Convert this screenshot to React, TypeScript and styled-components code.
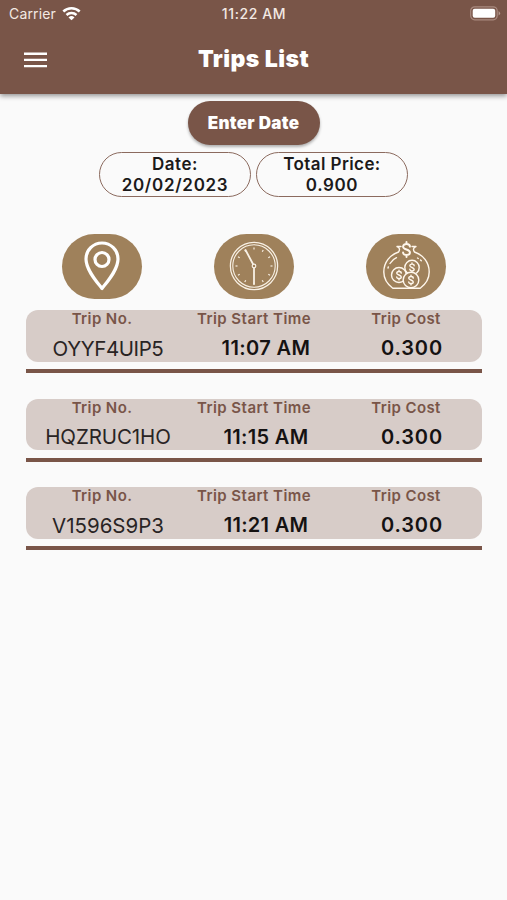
import React from 'react';
import styled, { createGlobalStyle } from 'styled-components';

const brown = '#795548';

const GlobalStyle = createGlobalStyle`
  * { box-sizing: border-box; }
  body { margin: 0; background: #fafafa; font-family: Inter, "Liberation Sans", sans-serif; }
`;

const Screen = styled.div`
  width: 507px;
  height: 900px;
  overflow: hidden;
  background: #fafafa;
  color: #1c1a1a;
`;

const Header = styled.header`
  height: 94px;
  background: ${brown};
  color: #fff;
  box-shadow: 0 2px 5px rgba(0, 0, 0, 0.42);
`;

const StatusBar = styled.div`
  display: grid;
  grid-template-columns: 1fr auto 1fr;
  align-items: center;
  height: 27px;
  padding: 0 6px 0 9px;
  color: #f3e9e3;
  font-size: 14px;
  line-height: 27px;
`;

const Carrier = styled.div`
  display: flex;
  align-items: center;
  gap: 6px;
  letter-spacing: 0.15px;
`;

const Clock = styled.div`
  margin-right: 2px;
  font-weight: 500;
  letter-spacing: 0.6px;
`;

const Battery = styled.svg`
  justify-self: end;
`;

const TitleBar = styled.div`
  display: grid;
  grid-template-columns: 60px 1fr 60px;
  align-items: center;
  height: 64px;
`;

const MenuButton = styled.button`
  display: flex;
  width: 23px;
  height: 23px;
  margin: 0 0 0 24px;
  padding: 0;
  border: 0;
  background: none;
`;

const Title = styled.h1`
  margin: 0;
  font-size: 23px;
  font-weight: 900;
  letter-spacing: 0.45px;
  line-height: 28px;
  text-align: center;
`;

const Filters = styled.section`
  display: flex;
  flex-direction: column;
  align-items: center;
  gap: 7px;
  padding-top: 7px;
`;

const DateButton = styled.button`
  width: 132px;
  height: 44px;
  padding: 0;
  border: 0;
  border-radius: 22px;
  background: ${brown};
  color: #fff;
  box-shadow: 0 2px 3px rgba(0, 0, 0, 0.3);
  font: 900 17px/44px Inter, sans-serif;
  letter-spacing: 0.3px;
`;

const Summary = styled.div`
  display: flex;
  gap: 5px;
`;

const Pill = styled.div`
  width: 152px;
  height: 45px;
  border: 1.4px solid #8b6a5e;
  border-radius: 23px;
  padding-top: 1px;
  font-size: 17px;
  font-weight: 600;
  line-height: 20.5px;
  text-align: center;
`;

const PillLine = styled.div<{ $spacing: number }>`
  letter-spacing: ${(p) => p.$spacing}px;
`;

const Icons = styled.div`
  display: grid;
  grid-template-columns: repeat(3, 152px);
  justify-items: center;
  margin: 37px 25px 0 26px;
`;

const Badge = styled.div`
  display: flex;
  width: 80px;
  height: 65px;
  border-radius: 33px;
  background: #9f815b;
`;

const Trips = styled.main`
  display: flex;
  flex-direction: column;
  gap: 25.4px;
  margin: 11px 25px 0 26px;
`;

const Trip = styled.article`
  height: 63.2px;
  border-bottom: 4px solid ${brown};
`;

const TripCard = styled.div`
  height: 51.5px;
  border-radius: 12px;
  background: #d7ccc8;
`;

const Labels = styled.div`
  display: grid;
  grid-template-columns: repeat(3, 152px);
  height: 17px;
  color: ${brown};
  font-size: 15px;
  font-weight: 600;
  line-height: 17px;
  text-align: center;
`;

const Label = styled.span<{ $spacing: number }>`
  letter-spacing: ${(p) => p.$spacing}px;
`;

const Values = styled.div`
  display: grid;
  grid-template-columns: 164px 152px 140px;
  align-items: center;
  height: 34px;
  margin-top: 4px;
  line-height: 34px;
  text-align: center;
`;

const TripNumber = styled.span<{ $spacing: number }>`
  font-size: 20.5px;
  letter-spacing: ${(p) => p.$spacing}px;
  color: #292424;
`;

const Value = styled.span<{ $spacing: number }>`
  height: 35px;
  font-size: 20px;
  font-weight: 600;
  letter-spacing: ${(p) => p.$spacing}px;
  color: #151212;
`;

const PinIcon = () => (
  <svg width="80" height="65" viewBox="0 0 80 65" fill="none" stroke="#fff" strokeWidth="3.2">
    <path d="M40 54.5C35 48 24 36 24 25a16 16 0 0 1 32 0c0 11-11 23-16 29.500Z" strokeLinejoin="round" />
    <circle cx="40" cy="25.500" r="7" />
  </svg>
);

const ClockIcon = () => (
  <svg width="80" height="65" viewBox="0 0 80 65" fill="none" stroke="#f8f0e4">
    <circle cx="40" cy="32" r="23.600" strokeWidth="1.300" />
    <circle cx="40" cy="32" r="21.200" strokeWidth="1.100" />
    {Array.from({ length: 12 }, (_, i) => (
      <path key={i} d="M40 13.500v2" strokeWidth="1.200" transform={`rotate(${i * 30} 40 32)`} />
    ))}
    <path d="m39 30-7.500-14M40 34v16" strokeWidth="1.800" strokeLinecap="round" />
    <circle cx="40" cy="32" r="1.800" strokeWidth="1.200" />
  </svg>
);

const dollar = 'M3 -2.500C3 -5.500 -3 -5.500 -3 -2.500C-3 0 3 0 3 2.500C3 5.500 -3 5.500 -3 2.500M0 -6.500V-4.700M0 4.700V6.500';

const SavingsIcon = () => (
  <svg width="80" height="65" viewBox="0 0 80 65" fill="none" stroke="#fff7ec" strokeWidth="1.400" strokeLinecap="round" strokeLinejoin="round">
    <path d="M35 12.500h-4c3 1 3 3.500 1.500 5.500C24 21 17.800 28 17.800 38c0 8 4 12.500 9 16.200h27.400c5-3.700 9-8.200 9-16.200 0-10-6.200-17-14.700-20-1.500-2-1.500-4.500 1.500-5.500h-4" />
    <path d="M24 29.500c1.500-2.600 3.500-4.500 6.500-5.800M22.300 33l-.3 1M51.500 24l.8.5M54.500 26l.8.800" />
    <path d={dollar} strokeWidth="1.700" transform="translate(40.500 15.500) scale(1.150)" />
    <g fill="#9f815b">
      <circle cx="46" cy="33.500" r="7.200" />
      <circle cx="33" cy="41" r="7.500" />
      <circle cx="45" cy="46" r="7.800" />
    </g>
    <g strokeWidth="1.900">
      <path d={dollar} transform="translate(46 33.500) scale(.72)" />
      <path d={dollar} transform="translate(33 41) scale(.75)" />
      <path d={dollar} transform="translate(45 46) scale(.75)" />
    </g>
  </svg>
);

const trips = [
  { id: 'OYYF4UIP5', time: '11:07 AM', idSpacing: -0.4, timeSpacing: 0.4 },
  { id: 'HQZRUC1HO', time: '11:15 AM', idSpacing: -0.1, timeSpacing: 0.3 },
  { id: 'V1596S9P3', time: '11:21 AM', idSpacing: 0, timeSpacing: 0.3 },
];

export default function App() {
  return (
    <>
      <GlobalStyle />
      <Screen>
        <Header>
          <StatusBar>
            <Carrier>
              Carrier
              <svg width="19" height="15" viewBox="0 0 19 15" fill="none" stroke="#fff" strokeWidth="2.500">
                <path d="M1.300 5.500a12 12 0 0 1 16.400 0M4.500 9a7.400 7.400 0 0 1 10 0" />
                <path d="M9.500 14.300 6.500 11.400a4.500 4.500 0 0 1 6 0Z" fill="#fff" stroke="none" />
              </svg>
            </Carrier>
            <Clock>11:22 AM</Clock>
            <Battery width="31" height="15" viewBox="0 0 31 15">
              <rect x=".7" y=".8" width="26.500" height="13" rx="4" fill="none" stroke="#a98a7f" strokeWidth="1.200" />
              <rect x="2.700" y="2.800" width="22.500" height="9" rx="2" fill="#fff" />
              <path d="M28.600 5v4.500q3-2.250 0-4.500" fill="#b69b90" />
            </Battery>
          </StatusBar>
          <TitleBar>
            <MenuButton aria-label="Menu">
              <svg width="23" height="23" viewBox="0 0 23 23" stroke="#fff" strokeWidth="2.400">
                <path d="M0 5.700h23M0 11.900h23M0 18.100h23" />
              </svg>
            </MenuButton>
            <Title>Trips List</Title>
          </TitleBar>
        </Header>
        <Filters>
          <DateButton>Enter Date</DateButton>
          <Summary>
            <Pill>
              <PillLine $spacing={0.5}>Date:</PillLine>
              <PillLine $spacing={0.7}>20/02/2023</PillLine>
            </Pill>
            <Pill>
              <PillLine $spacing={0.4}>Total Price:</PillLine>
              <PillLine $spacing={0.6}>0.900</PillLine>
            </Pill>
          </Summary>
        </Filters>
        <Icons>
          <Badge><PinIcon /></Badge>
          <Badge><ClockIcon /></Badge>
          <Badge><SavingsIcon /></Badge>
        </Icons>
        <Trips>
          {trips.map((trip) => (
            <Trip key={trip.id}>
              <TripCard>
                <Labels>
                  <Label $spacing={0.4}>Trip No.</Label>
                  <Label $spacing={0.45}>Trip Start Time</Label>
                  <Label $spacing={0.4}>Trip Cost</Label>
                </Labels>
                <Values>
                  <TripNumber $spacing={trip.idSpacing}>{trip.id}</TripNumber>
                  <Value $spacing={trip.timeSpacing}>{trip.time}</Value>
                  <Value $spacing={0.9}>0.300</Value>
                </Values>
              </TripCard>
            </Trip>
          ))}
        </Trips>
      </Screen>
    </>
  );
}
